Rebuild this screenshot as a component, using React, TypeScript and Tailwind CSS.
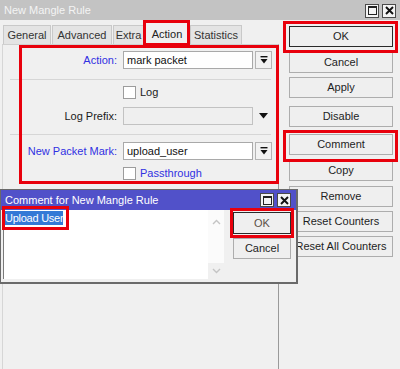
import React from "react";

const font = { fontFamily: '"Liberation Sans", Arial, sans-serif' };

function WinButtons() {
  return (
    <div className="flex gap-[3px]">
      <div className="w-[14px] h-[14px] border border-[#4a4a4a] bg-[#f4f4f4] flex items-center justify-center">
        <div className="w-[9px] h-[9px] border border-[#222] border-t-2" />
      </div>
      <div className="w-[14px] h-[14px] border border-[#4a4a4a] bg-[#f4f4f4] flex items-center justify-center">
        <svg width="9" height="9" viewBox="0 0 9 9">
          <path d="M1 1L8 8M8 1L1 8" stroke="#111" strokeWidth="1.9" />
        </svg>
      </div>
    </div>
  );
}

function DropBtn() {
  return (
    <div className="w-[17px] h-[18px] border border-[#b4b4b4] bg-[#f2f2f2] flex items-center justify-center ml-[2px]">
      <svg width="8" height="8" viewBox="0 0 8 8">
        <rect x="0.5" y="0" width="7" height="1.4" fill="#111" />
        <path d="M0.5 3 L7.5 3 L4 7.5 Z" fill="#111" />
      </svg>
    </div>
  );
}

function Check() {
  return <div className="w-[13px] h-[13px] border border-[#9c9c9c] bg-white" />;
}

function Tab({ label, w, active }: { label: string; w: string; active?: boolean }) {
  return (
    <div
      className={
        active
          ? `${w} h-[23px] -mb-[1px] relative z-10 bg-[#f0f0f0] border border-b-0 border-[#c4c4c4] flex items-center justify-center text-[#222]`
          : `${w} h-[19px] bg-[#e4e4e4] border border-b-0 border-[#c9c9c9] flex items-center justify-center text-[#333]`
      }
    >
      {label}
    </div>
  );
}

function SideBtn({ label, mt, def }: { label: string; mt: string; def?: boolean }) {
  return (
    <div
      className={`${mt} w-[104px] h-[21px] border ${def ? "border-[#2a2a2a]" : "border-[#adadad]"} bg-[#efefef] flex items-center justify-center text-[#1e1e1e] whitespace-nowrap`}
    >
      {label}
    </div>
  );
}

export default function App() {
  return (
    <div
      className="relative w-[400px] h-[369px] overflow-hidden bg-[#f0f0f0] text-[11px] leading-none text-[#1a1a1a]"
      style={font}
    >
      {/* Title bar */}
      <div className="h-[20px] bg-[#c3c3c3] flex items-center pl-[4px] pr-[4px] pt-[1px] text-[#f4f4f4]">
        <span>New Mangle Rule</span>
        <div className="ml-auto">
          <WinButtons />
        </div>
      </div>

      <div className="flex">
        {/* Left column */}
        <div className="w-[279px] flex flex-col">
          <div className="h-[24px] pl-[3px] flex items-end gap-[1px]">
            <Tab label="General" w="w-[48px]" />
            <Tab label="Advanced" w="w-[60px]" />
            <Tab label="Extra" w="w-[31px]" />
            <Tab label="Action" w="w-[44px]" active />
            <Tab label="Statistics" w="w-[52px]" />
          </div>
          <div className="ml-[2px] h-[325px] border-t border-l border-r border-t-[#cfcfcf] border-l-[#d6d6d6] border-r-[#9a9a9a] pt-[6px]">
            {/* Action row */}
            <div className="flex items-center h-[18px]">
              <div className="w-[114px] text-right text-[#3030e2]">Action:</div>
              <div className="ml-[6px] w-[130px] h-[18px] border border-[#a9a9a9] bg-white flex items-center pl-[3px] text-[#111]">
                mark packet
              </div>
              <DropBtn />
            </div>
            <div className="mt-[10px] ml-[7px] w-[261px] border-t border-[#d6d6d6]" />
            {/* Log */}
            <div className="mt-[6px] flex items-center h-[13px]">
              <div className="w-[114px]" />
              <div className="ml-[6px]">
                <Check />
              </div>
              <span className="ml-[4px] text-[#1a1a1a]">Log</span>
            </div>
            {/* Log Prefix */}
            <div className="mt-[8px] flex items-center h-[18px]">
              <div className="w-[114px] text-right">Log Prefix:</div>
              <div className="ml-[6px] w-[130px] h-[18px] border border-[#c2c2c2] bg-[#efefef]" />
              <svg className="ml-[6px]" width="9" height="6" viewBox="0 0 9 6">
                <path d="M0 0 L9 0 L4.5 5.5 Z" fill="#111" />
              </svg>
            </div>
            <div className="mt-[9px] ml-[7px] w-[261px] border-t border-[#d6d6d6]" />
            {/* New Packet Mark */}
            <div className="mt-[7px] flex items-center h-[18px]">
              <div className="w-[114px] text-right text-[#3030e2]">New Packet Mark:</div>
              <div className="ml-[6px] w-[130px] h-[18px] border border-[#a9a9a9] bg-white flex items-center pl-[3px] text-[#111]">
                upload_user
              </div>
              <DropBtn />
            </div>
            {/* Passthrough */}
            <div className="mt-[7px] flex items-center h-[13px]">
              <div className="w-[114px]" />
              <div className="ml-[6px]">
                <Check />
              </div>
              <span className="ml-[4px] text-[#3030e2]">Passthrough</span>
            </div>
          </div>
        </div>

        {/* Right column buttons */}
        <div className="flex flex-col pl-[10px]">
          <SideBtn label="OK" mt="mt-[6px]" def />
          <SideBtn label="Cancel" mt="mt-[5px]" />
          <SideBtn label="Apply" mt="mt-[4px]" />
          <SideBtn label="Disable" mt="mt-[8px]" />
          <SideBtn label="Comment" mt="mt-[7px]" />
          <SideBtn label="Copy" mt="mt-[5px]" />
          <SideBtn label="Remove" mt="mt-[5px]" />
          <SideBtn label="Reset Counters" mt="mt-[4px]" />
          <SideBtn label="Reset All Counters" mt="mt-[4px]" />
        </div>
      </div>

      {/* Comment dialog window */}
      <div className="absolute left-0 top-[189px] w-[298px] h-[95px] border border-r-2 border-b-2 border-[#6a6a6a] bg-[#f0f0f0] flex flex-col z-20">
        <div className="h-[20px] bg-[#5151c9] flex items-center pl-[4px] pr-[5px] text-white">
          <span>Comment for New Mangle Rule</span>
          <div className="ml-auto">
            <WinButtons />
          </div>
        </div>
        <div className="flex">
          <div className="ml-[2px] w-[221px] h-[69px] bg-white border-l border-[#7a7a7a] flex">
            <div className="flex-1 pl-[1px] pt-[1px]">
              <span className="inline-block bg-[#3479d6] text-white tracking-[-0.25px] leading-[14px]">Upload User</span>
            </div>
            <div className="w-[16px] flex flex-col bg-[#fbfbfb]">
              <div className="h-[16px] flex items-center justify-center mt-[4px]">
                <svg width="9" height="6" viewBox="0 0 9 6">
                  <path d="M1 5 L4.5 1.5 L8 5" stroke="#c4c4c4" strokeWidth="1.4" fill="none" />
                </svg>
              </div>
              <div className="flex-1" />
              <div className="h-[16px] bg-[#f0f0f0] flex items-center justify-center">
                <svg width="9" height="6" viewBox="0 0 9 6">
                  <path d="M1 1 L4.5 4.5 L8 1" stroke="#c4c4c4" strokeWidth="1.4" fill="none" />
                </svg>
              </div>
            </div>
          </div>
          <div className="ml-[9px] flex flex-col">
            <div className="mt-[2px] w-[58px] h-[22px] border border-[#2a2a2a] bg-[#efefef] flex items-center justify-center text-[#5c5046]">
              OK
            </div>
            <div className="mt-[4px] w-[58px] h-[21px] border border-[#adadad] bg-[#efefef] flex items-center justify-center text-[#1e1e1e]">
              Cancel
            </div>
          </div>
        </div>
      </div>

      {/* Red annotation boxes */}
      <div className="absolute left-[143px] top-[20px] w-[47px] h-[26px] border-[3px] border-[#e8000c] z-30 pointer-events-none" />
      <div className="absolute left-[19px] top-[45px] w-[260px] h-[139px] border-[3px] border-[#e8000c] z-10 pointer-events-none" />
      <div className="absolute left-[283px] top-[21px] w-[115px] h-[32px] border-[3px] border-[#e8000c] z-30 pointer-events-none" />
      <div className="absolute left-[283px] top-[130px] w-[115px] h-[32px] border-[3px] border-[#e8000c] z-30 pointer-events-none" />
      <div className="absolute left-[2px] top-[206px] w-[67px] h-[24px] border-[3px] border-[#e8000c] z-30 pointer-events-none" />
      <div className="absolute left-[230px] top-[208px] w-[64px] h-[30px] border-[3px] border-[#e8000c] z-30 pointer-events-none" />
    </div>
  );
}
